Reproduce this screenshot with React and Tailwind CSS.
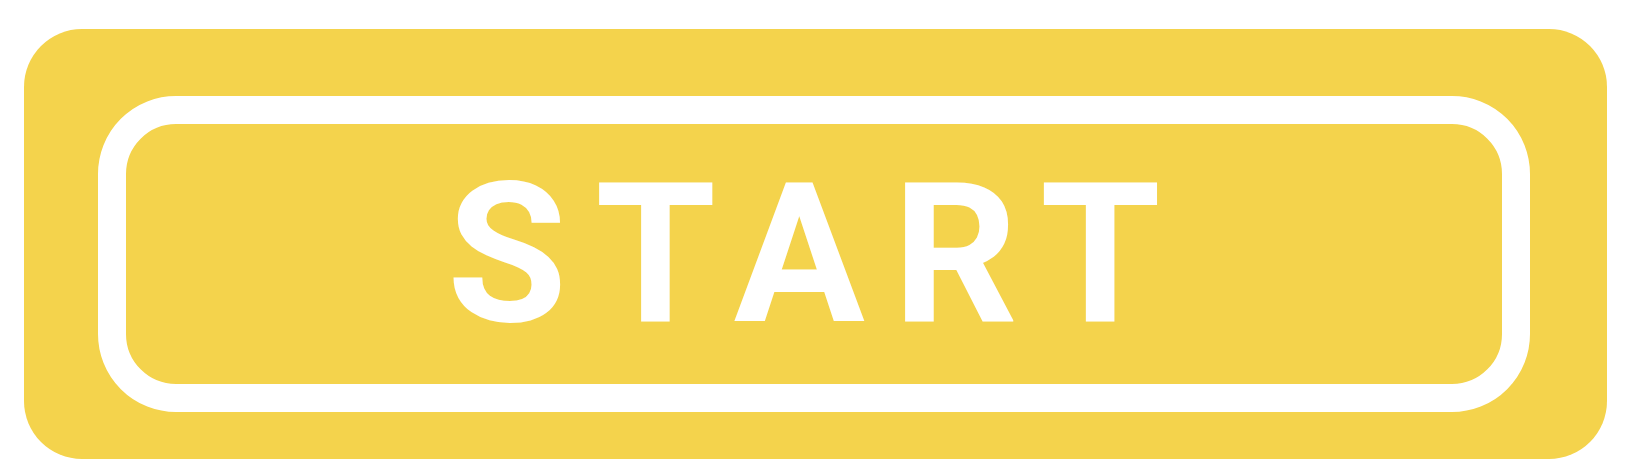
import React from "react";

export default function App() {
  return (
    <div className="w-[1645px] h-[472px] bg-white overflow-hidden">
      <div className="ml-[24px] mt-[29px] w-[1583px] h-[430px] rounded-[58px] bg-[#f4d34c] pl-[74px] pt-[67px] pr-[77px] pb-[47px]">
        <div className="h-full rounded-[78px] border-[28px] border-white flex items-center justify-center">
          <span className="font-['Roboto',sans-serif] font-bold text-[195px] leading-none tracking-[28px] text-white pl-[8px]">
            START
          </span>
        </div>
      </div>
    </div>
  );
}
